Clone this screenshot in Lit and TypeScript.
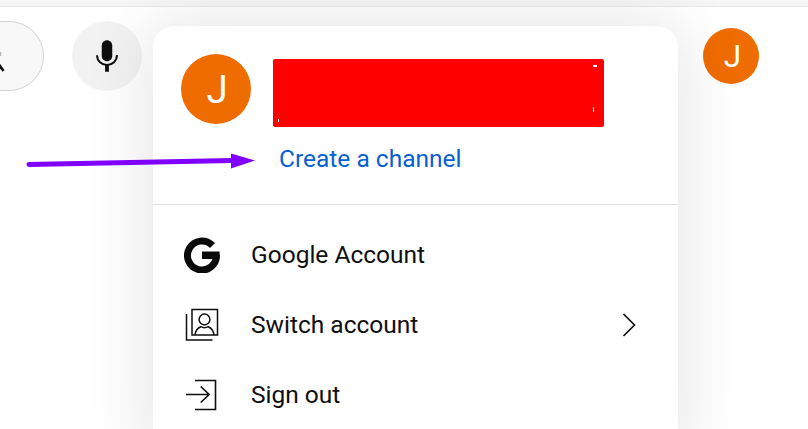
import { LitElement, html, css } from "lit";
import { customElement } from "lit/decorators.js";

@customElement("app-root")
export class AppRoot extends LitElement {
  static styles = css`
    :host { display: block; position: relative; width: 808px; height: 429px; overflow: hidden; background: #fff; font-family: Roboto, "Liberation Sans", sans-serif; color: #0f0f0f; }
    .topstrip { height: 6px; background: #f6f6f6; border-bottom: 1px solid #e9e9e9; }
    .bar { display: flex; align-items: flex-start; padding-top: 14px; height: 84px; box-sizing: content-box; }
    .search { width: 104px; height: 70px; margin-left: -60px; box-sizing: border-box; background: #f8f8f8; border: 1px solid #d3d3d3; border-radius: 0 35px 35px 0; overflow: hidden; display: flex; align-items: center; padding-left: 54px; flex: none; }
    .mic { margin-left: 28px; width: 70px; height: 70px; border-radius: 50%; background: #f2f2f2; display: flex; align-items: center; justify-content: center; flex: none; }
    .hdr-avatar { margin-left: auto; margin-right: 49px; margin-top: 7px; width: 56px; height: 56px; box-sizing: border-box; padding-left: 3px; border-radius: 50%; background: #ef6c00; color: #fff; font-size: 31.5px; display: flex; align-items: center; justify-content: center; flex: none; }
    .menu { position: absolute; left: 153px; top: 26px; width: 525px; height: 440px; background: #fff; border-radius: 21px; box-shadow: 0 0 70px rgba(0,0,0,.12); }
    .head { display: flex; gap: 22px; padding: 28px 28px 0; box-sizing: border-box; border-bottom: 1px solid #e0e0e0; margin-bottom: 15px; height: 179px; }
    .avatar { width: 70px; height: 70px; box-sizing: border-box; padding-left: 2px; border-radius: 50%; background: #ef6c00; color: #fff; font-size: 38.5px; display: flex; align-items: center; justify-content: center; flex: none; }
    .who { display: flex; flex-direction: column; padding-top: 5px; }
    .redact { position: relative; width: 331px; height: 68px; background: #f00; border-radius: 2px; }
    .speck { position: absolute; background: #fff; }
    .s1 { left: 5px; top: 60px; width: 1px; height: 3px; }
    .s2 { left: 320px; top: 6px; width: 4px; height: 2px; }
    .s3 { left: 320px; top: 48px; width: 1px; height: 5px; }
    .link { display: block; margin: 19px 0 0 6px; color: #065fd4; font-size: 24.5px; line-height: 26px; text-decoration: none; }
    .row { display: flex; align-items: center; height: 70px; padding: 0 40px 0 31px; font-size: 24.5px; }
    .ico { width: 67px; display: flex; align-items: center; flex: none; }
    .label { flex: 1; padding-bottom: 2px; }
    .ico svg, .chev { display: block; }
    .arrow { position: absolute; left: 0; top: 0; pointer-events: none; }
  `;

  render() {
    return html`
      <div class="topstrip"></div>
      <div class="bar">
        <div class="search">
          <svg width="16" height="32" viewBox="0 0 16 32" fill="none"><path d="M5.500 12v4" stroke="#b5b5b5" stroke-width="1.500"/><path d="M4 24.500 8.500 31" stroke="#0f0f0f" stroke-width="2.500"/></svg>
        </div>
        <div class="mic">
          <svg width="42" height="42" viewBox="0 0 24 24"><path fill="#0f0f0f" d="M12 3c-1.66 0-3 1.34-3 3v6c0 1.66 1.34 3 3 3s3-1.34 3-3V6c0-1.66-1.34-3-3-3z"/><path fill="none" stroke="#0f0f0f" stroke-width="1.100" d="M6.300 11.500c0 3.300 2.600 5.600 5.700 5.600s5.700-2.300 5.700-5.600"/><path stroke="#0f0f0f" stroke-width="2.200" d="M12 17v4"/></svg>
        </div>
        <div class="hdr-avatar">J</div>
      </div>

      <div class="menu">
        <div class="head">
          <div class="avatar">J</div>
          <div class="who">
            <div class="redact"><i class="speck s1"></i><i class="speck s2"></i><i class="speck s3"></i></div>
            <a class="link" href="#">Create a channel</a>
          </div>
        </div>
        <div class="row">
          <div class="ico"><svg width="36" height="36" viewBox="0 0 36 36"><path fill="none" stroke="#0a0a0a" stroke-width="7" d="M28.500 8.500A14.500 14.500 0 1 0 32.500 18"/><path fill="#0a0a0a" d="M18 14.500h17.500c.3 2 .3 5-.4 7.500H18z"/></svg></div>
          <div class="label">Google Account</div>
        </div>
        <div class="row">
          <div class="ico"><svg width="36" height="36" viewBox="0 0 36 36" fill="none" stroke="#0f0f0f" stroke-width="1.500"><path d="M8 2.500h25.500V28H8z"/><path d="M2.500 7v26h26"/><circle cx="20.500" cy="12.500" r="5.400"/><path d="M11 28c.5-4 2.500-7 5.800-8.300 2.400 1.300 5 1.300 7.400 0 3.300 1.300 5.300 4.300 5.800 8.300"/></svg></div>
          <div class="label">Switch account</div>
          <svg class="chev" width="16" height="24" viewBox="0 0 16 24"><path d="M1.500 1 12.500 12 1.500 23" fill="none" stroke="#0f0f0f" stroke-width="1.700"/></svg>
        </div>
        <div class="row">
          <div class="ico"><svg width="36" height="36" viewBox="0 0 36 36" fill="none" stroke="#0f0f0f" stroke-width="1.600"><path d="M11 3.500H31.500V32.500H11"/><path d="M2 17.500h23M16.700 9.500l8.500 8-8.500 8"/></svg></div>
          <div class="label">Sign out</div>
        </div>
      </div>

      <svg class="arrow" width="808" height="429" viewBox="0 0 808 429">
        <path d="M29 164.500 232 160.500" stroke="#8000ff" stroke-width="5" stroke-linecap="round" fill="none"/>
        <path d="M231 153.500 255 160.500 231 168.500z" fill="#8000ff"/>
      </svg>
    `;
  }
}
